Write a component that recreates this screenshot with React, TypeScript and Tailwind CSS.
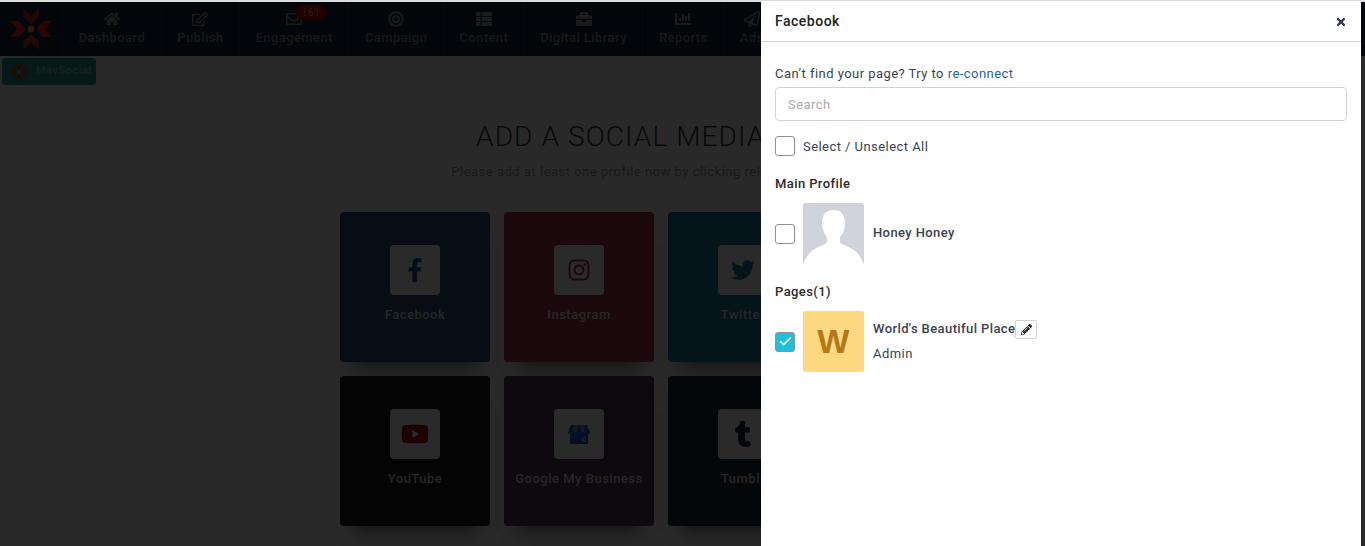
import { FaHome, FaRegEdit, FaRegEnvelope, FaBullseye, FaThList, FaBriefcase, FaChartBar, FaRegPaperPlane, FaFacebookF, FaInstagram, FaTwitter, FaYoutube, FaTumblr, FaPencilAlt, FaTimes } from 'react-icons/fa';
import { Check } from 'lucide-react';
import type { ReactNode } from 'react';

const navItems = [
  { label: 'Dashboard', icon: <FaHome /> },
  { label: 'Publish', icon: <FaRegEdit /> },
  { label: 'Engagement', icon: <FaRegEnvelope />, badge: '161' },
  { label: 'Campaign', icon: <FaBullseye /> },
  { label: 'Content', icon: <FaThList /> },
  { label: 'Digital Library', icon: <FaBriefcase /> },
  { label: 'Reports', icon: <FaChartBar /> },
  { label: 'Ads', icon: <FaRegPaperPlane /> },
];

function Logo({ size }: { size: number }) {
  const arm = 'M32 2 L50 19 L68 2 L68 22 L50 39 L32 22 Z';
  return (
    <svg width={size} height={size} viewBox="0 0 100 100">
      {[0, 90, 180, 270].map((r) => (
        <path key={r} d={arm} fill={r % 180 === 0 ? '#200805' : '#280704'} transform={`rotate(${r} 50 50)`} />
      ))}
      <circle cx="50" cy="50" r="8" fill="#2a1a05" />
    </svg>
  );
}

function GmbIcon() {
  return (
    <svg width="22" height="19" viewBox="0 0 22 19">
      <path d="M2 8h18v10a1 1 0 0 1-1 1H3a1 1 0 0 1-1-1z" fill="#060f22" />
      <path d="M3 0h16l3 7a2.5 2.5 0 0 1-5 .5 2.5 2.5 0 0 1-6 0 2.5 2.5 0 0 1-6 0A2.5 2.5 0 0 1 0 7z" fill="#071126" />
      <path d="M6.500 0h3L9 7H5.500zM12.500 0h3L16.500 7H13z" fill="#1a1a20" />
      <circle cx="16" cy="14.500" r="1.800" fill="none" stroke="#222c42" strokeWidth="0.800" />
    </svg>
  );
}

const cards: { label: string; bg: string; icon: ReactNode }[] = [
  { label: 'Facebook', bg: 'bg-[#080c14]', icon: <FaFacebookF className="text-[24px] text-[#080c16]" /> },
  { label: 'Instagram', bg: 'bg-[#1c090d]', icon: <FaInstagram className="text-[24px] text-[#1c080c]" /> },
  { label: 'Twitter', bg: 'bg-[#03141a]', icon: <FaTwitter className="text-[24px] text-[#03141a]" /> },
  { label: 'YouTube', bg: 'bg-[#040404]', icon: <FaYoutube className="text-[28px] text-[#1e0000]" /> },
  { label: 'Google My Business', bg: 'bg-[#0e080f]', icon: <GmbIcon /> },
  { label: 'Tumblr', bg: 'bg-[#03070a]', icon: <FaTumblr className="text-[26px] text-[#03070a]" /> },
];

function Box({ checked }: { checked?: boolean }) {
  return (
    <span className={`flex h-5 w-5 shrink-0 items-center justify-center rounded-[3px] border border-[#8f8f8f] ${checked ? 'bg-[#1fbfe0]' : 'bg-white'}`}>
      {checked && <Check size={15} strokeWidth={2.500} className="text-white" />}
    </span>
  );
}

function AvatarIcon() {
  return (
    <svg width="61" height="61" viewBox="0 0 61 61" className="rounded-[2px] bg-[#d0d3d9]">
      <path d="M30.500 7c-8 0-11.500 5.500-11.500 12.500 0 6 2 11 5 15v5c-3 3.500-15 5-20 14l-4 7.500h61l-4-7.500c-5-9-17-10.500-20-14v-5c3-4 5-9 5-15 0-7-3.500-12.500-11.500-12.500z" fill="#fff" />
    </svg>
  );
}

export default function App() {
  return (
    <div className="relative h-[546px] overflow-hidden bg-[#292929] font-['Roboto',sans-serif] tracking-[0.5px]">
      <div className="h-[2px] bg-[#dcdcdc]" />
      <nav className="flex h-[54px] bg-[#02050a] text-[#191919]">
        <div className="flex w-[63px] shrink-0 items-center justify-center border-r border-[#05080e]">
          <Logo size={44} />
        </div>
        {navItems.map((item) => (
          <div key={item.label} className="relative flex flex-col items-center justify-center whitespace-nowrap border-r border-[#05080e] px-[15.500px] text-[13px] font-medium tracking-[0.42px]">
            <span className="mb-[1px] text-[16px] leading-[16px] text-[#1b1b1b]">{item.icon}</span>
            <span className="leading-[20px]">{item.label}</span>
            {item.badge && (
              <span className="absolute left-[55px] top-[3px] h-[15px] w-[32px] rounded-full bg-[#220000] text-center text-[10px] leading-[15px] text-[#241a1a]">{item.badge}</span>
            )}
          </div>
        ))}
      </nav>

      <div className="ml-[2px] mt-[2px] flex h-[27px] w-[94px] items-center gap-[7px] rounded-[3px] bg-[#051a18] pl-[7px] text-[11px] text-[#182220]">
        <Logo size={20} />
        <span className="font-medium">MavSocial</span>
      </div>

      <h1 className="mt-[34px] text-center text-[28px] font-light leading-[36px] tracking-[1.100px] text-[#090909]">ADD A SOCIAL MEDIA PROFILE</h1>
      <p className="mt-[8px] text-center text-[13px] leading-[18px] text-[#191919]">Please add at least one profile now by clicking relevant social icons below</p>

      <div className="ml-[340px] mt-[31px] grid w-[478px] grid-cols-3 gap-[14px]">
        {cards.map((card) => (
          <div key={card.label} className={`flex h-[150px] flex-col items-center rounded-[4px] pt-[33px] shadow-[0_20px_16px_-14px_rgba(0,0,0,0.5)] ${card.bg}`}>
            <div className="flex h-[50px] w-[50px] items-center justify-center rounded-[4px] bg-[#2a2a2a]">{card.icon}</div>
            <span className="mt-[11px] text-[13px] font-medium leading-[18px] text-[#272727]">{card.label}</span>
          </div>
        ))}
      </div>

      <aside className="absolute bottom-0 right-[4px] top-[1px] w-[600px] bg-white text-[13px] tracking-[0.45px] text-[#3a3f51]">
        <div className="flex h-[41px] items-center justify-between border-b border-[#d0d0d0] px-[14px]">
          <span className="text-[14px] font-medium tracking-[0.5px] text-[#222]">Facebook</span>
          <FaTimes className="mt-px text-[12px] text-[#2b3550]" />
        </div>
        <div className="px-[14px]">
          <p className="mt-[23px] leading-[18px]">Can’t find your page? Try to <span className="text-[#1f5fa8]">re-connect</span></p>
          <div className="mt-[4px] flex h-[34px] w-[572px] items-center rounded-[4px] border border-[#d2d2d2] pl-[12px] pt-[2px] text-[#aaaaaa]">Search</div>
          <label className="mt-[15px] flex h-5 items-center gap-2">
            <Box />
            <span className="pt-[1px] leading-[19px]">Select / Unselect All</span>
          </label>
          <h3 className="mt-[19px] text-[13px] font-medium leading-[18px] tracking-[0.4px] text-[#2a2a2a]">Main Profile</h3>
          <div className="mt-[10px] flex items-center gap-2">
            <Box />
            <AvatarIcon />
            <span className="-mt-[1px] ml-px font-medium tracking-[0.4px]">Honey Honey</span>
          </div>
          <h3 className="mt-[19px] text-[13px] font-medium leading-[18px] tracking-[0.4px] text-[#2a2a2a]">Pages(1)</h3>
          <div className="mt-[10px] flex items-center gap-2">
            <Box checked />
            <div className="flex h-[61px] w-[61px] items-center justify-center rounded-[2px] bg-[#ffd882] font-['Liberation_Sans',sans-serif] text-[34px] font-bold text-[#b5761a]">W</div>
            <div className="-mt-[1px] ml-px">
              <div className="flex items-center font-medium tracking-[0.4px]">
                World's Beautiful Place
                <span className="flex h-[19px] w-[22px] items-center justify-center rounded-[2px] border border-[#d2d2d2] text-[11px] text-[#2a2a2a]"><FaPencilAlt /></span>
              </div>
              <div className="mt-[6px] leading-[18px]">Admin</div>
            </div>
          </div>
        </div>
      </aside>
    </div>
  );
}
